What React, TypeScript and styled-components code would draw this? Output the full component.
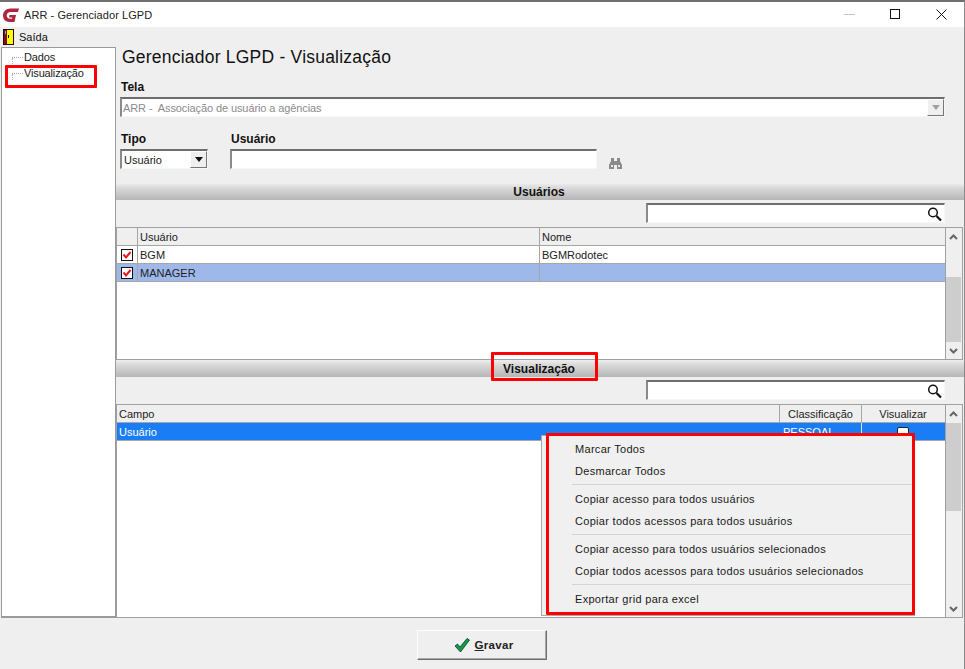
import React from "react";
import styled, { createGlobalStyle } from "styled-components";

const Global = createGlobalStyle`
  html, body { margin: 0; padding: 0; background: #fff; overflow: hidden; }
  * { box-sizing: border-box; }
  body { font-family: "Liberation Sans", Arial, sans-serif; font-size: 11px; color: #111; }
`;

const Window = styled.div`
  position: relative; width: 965px; height: 669px; display: flex; flex-direction: column;
  background: #efefef; border-top: 2px solid #6f6f6f; border-right: 1px solid #8a8a8a;
`;
const TitleBar = styled.div`
  height: 25px; flex: none; background: #fff; display: flex; align-items: center; padding-left: 3px;
`;
const TitleText = styled.span` margin-left: 5px; font-size: 11px; letter-spacing: 0.08px; color: #222; `;
const WinButtons = styled.div` margin-left: auto; display: flex; align-items: center; height: 100%; `;
const WinButton = styled.div`
  width: 46px; height: 100%; display: flex; align-items: center; justify-content: center;
`;
const MenuBar = styled.div` height: 20px; flex: none; display: flex; align-items: center; gap: 5px; padding-left: 3px; `;
const Body = styled.div` height: 571px; flex: none; display: flex; `;
const Tree = styled.div`
  width: 115px; margin-left: 1px; flex: none; background: #fff; border: 1px solid #9a9a9a; border-bottom-width: 2px;
  padding: 1px 0 0 10px;
`;
const TreeItem = styled.div`
  height: 16px; display: flex; align-items: center; font-size: 11px; gap: 1px; color: #222; letter-spacing: -0.15px;
`;
const TreeDots = styled.span`
  width: 11px; height: 1px; border-top: 1px dotted #a8a8a8; position: relative;
  &::after { content: ""; position: absolute; left: 0; top: 0; height: 6px; border-left: 1px dotted #b8b8b8; }
`;
const Main = styled.div` flex: 1; min-width: 0; display: flex; flex-direction: column; `;
const Heading = styled.h1`
  margin: 0; height: 33px; padding: 0 0 0 6px; font: 400 17.5px "Liberation Sans", Arial, sans-serif;
  letter-spacing: 0.22px; color: #111; line-height: 21px;
`;
const FieldLabel = styled.div` font-weight: 700; font-size: 12px; height: 15px; line-height: 15px; color: #111; padding-left: 1px; `;
const Field = styled.div<{ $w?: number }>` width: ${(p) => (p.$w ? p.$w + "px" : "auto")}; flex: none; `;
const TelaBlock = styled.div` padding: 0 19px 0 4px; height: 52px; `;
const Sunken = styled.div`
  height: 20px; width: 100%; background: #fff; display: flex; align-items: center;
  border: 1px solid #f6f6f6; border-top: 2px solid #6e6e6e; border-left: 2px solid #8a8a8a; margin-top: 2px;
  font-size: 11px; padding-left: 2px; color: #222;
`;
const Muted = styled.span` color: #8b8b8b; letter-spacing: -0.1px; white-space: pre; margin-left: -1px; `;
const ComboBtn = styled.div<{ $off?: boolean }>`
  margin-left: auto; width: 17px; height: 17px; background: #efefef; display: flex; align-items: center; justify-content: center;
  border: 1px solid; border-color: #fff #777 #777 #fff;
  &::after { content: ""; border: 4px solid transparent; border-top: 5px solid ${(p) => (p.$off ? "#a0a0a0" : "#111")}; border-bottom: 0; }
`;
const FormRow = styled.div` display: flex; gap: 22px; padding-left: 4px; height: 51px; position: relative; `;
const SectionBar = styled.div`
  height: 17px; flex: none; background: linear-gradient(#efefef, #d8d8d8 30%, #b6b6b6);
  font-weight: 700; font-size: 12px; display: flex; align-items: center; justify-content: center; color: #111; padding-right: 2px;
`;
const SearchRow = styled.div` height: 27px; flex: none; padding: 3px 19px 0 0; display: flex; justify-content: flex-end; `;
const SearchBox = styled.div`
  width: 299px; height: 20px; background: #fff; display: flex; align-items: center; justify-content: flex-end; padding-right: 1px;
  border: 1px solid #f6f6f6; border-top: 2px solid #6e6e6e; border-left: 2px solid #8a8a8a;
`;
const Grid = styled.div<{ $h: number }>`
  height: ${(p) => p.$h}px; flex: none; background: #fff; border: 1px solid #a0a0a0; margin-right: 1px;
  display: flex; position: relative;
`;
const GridBody = styled.div` flex: 1; min-width: 0; display: flex; flex-direction: column; `;
const Row = styled.div<{ $bg?: string; $fg?: string }>`
  height: 18px; flex: none; display: flex; background: ${(p) => p.$bg || "#fff"}; color: ${(p) => p.$fg || "#222"};
  border-bottom: 1px solid #a6a6a6; font-size: 11px; line-height: 17px;
`;
const Cell = styled.div<{ $w?: number; $center?: boolean; $line?: string; $pad?: number }>`
  ${(p) => (p.$w ? `width:${p.$w}px; flex:none;` : "flex:1;")}
  padding-left: ${(p) => p.$pad ?? 2}px; padding-top: 1px; border-right: 1px solid ${(p) => p.$line || "transparent"};
  display: flex; align-items: center; overflow: hidden; white-space: nowrap;
  justify-content: ${(p) => (p.$center ? "center" : "flex-start")};
  ${(p) => (p.$center ? "padding-left:0;" : "")}
`;
const Scroll = styled.div`
  width: 17px; flex: none; background: #efefef; border-left: 1px solid #a0a0a0; position: relative;
`;
const Thumb = styled.div<{ $top: number; $h: number }>`
  position: absolute; left: 0; width: 15px; top: ${(p) => p.$top}px; height: ${(p) => p.$h}px; background: #cdcdcd;
`;
const Arrow = styled.svg<{ $bottom?: boolean }>`
  position: absolute; left: 3px; ${(p) => (p.$bottom ? "bottom: 5px" : "top: 6px")};
`;
const CheckBoxEmpty = styled.div` width: 12px; height: 12px; background: #fff; border: 1px solid #222; border-radius: 2px; margin-top: 1px; `;
const Footer = styled.div` flex: 1; display: flex; align-items: center; justify-content: center; padding-top: 3px; `;
const SaveBtn = styled.button`
  width: 130px; height: 30px; background: #efefef; display: flex; align-items: center; justify-content: center; gap: 4px; padding: 0 0 0 3px;
  border: 1px solid; border-color: #fdfdfd #6e6e6e #6e6e6e #fdfdfd; box-shadow: inset -1px -1px 0 #a8a8a8;
  font: 700 11.5px "Liberation Sans", Arial, sans-serif; color: #222; letter-spacing: 0.3px;
  u { text-decoration: underline; }
`;
const Menu = styled.div`
  position: absolute; left: 541px; top: 433px; width: 374px; height: 181px; background: #f0f0f0;
  border: 1px solid #a8a8a8; padding: 2px 0 0 32px;
`;
const MenuItem = styled.div` height: 22px; display: flex; align-items: center; font-size: 11px; color: #1a1a1a; letter-spacing: 0.3px; padding-left: 1px; `;
const MenuSep = styled.div` height: 1px; background: #d4d4d4; margin: 2px 2px 3px -2px; `;
const Mark = styled.div<{ $l: number; $t: number; $w: number; $h: number }>`
  position: absolute; left: ${(p) => p.$l}px; top: ${(p) => p.$t}px; width: ${(p) => p.$w}px; height: ${(p) => p.$h}px;
  border: 3px solid #ff0000; pointer-events: none; border-radius: 1px;
`;
const Binoculars = styled.svg` position: absolute; left: 493px; top: 26px; `;

const Logo = () => (
  <svg width="16" height="16" viewBox="0 0 16 16">
    <path d="M16 1.500H7.500C3 1.500 0 4.700 0 8.600 0 12.400 2.700 15 6.500 15H11.500L13 8H6.500L6 10.500H9.300L9 11.700H7C5 11.700 3.700 10.500 3.700 8.600 3.700 6.300 5.500 5 7.500 5H15z" fill="#b0243f" />
  </svg>
);
const DoorIcon = () => (
  <svg width="11" height="16" viewBox="0 0 11 16">
    <rect width="11" height="16" fill="#2a0a0a" />
    <rect x="4" y="1" width="6" height="14" fill="#ffff00" />
    <rect x="1" y="1" width="3" height="14" fill="#7a1020" />
    <rect x="2" y="2" width="1" height="3" fill="#3fd0e0" />
    <rect x="5" y="6" width="1" height="3" fill="#111" />
  </svg>
);
const SearchIcon = () => (
  <svg width="17" height="16" viewBox="0 0 17 16">
    <circle cx="7" cy="6.500" r="4.300" fill="none" stroke="#111" strokeWidth="1.500" />
    <path d="M10.500 10 L15 14.500" stroke="#111" strokeWidth="2.200" />
  </svg>
);
const RedCheck = () => (
  <svg width="12" height="12" viewBox="0 0 12 12">
    <rect x=".5" y=".5" width="11" height="11" fill="#fff" stroke="#111" />
    <path d="M2.500 5.500L5 8.500 9.500 3" fill="none" stroke="#f01020" strokeWidth="2" />
  </svg>
);
const ArrowUp = () => (
  <Arrow width="9" height="6" viewBox="0 0 9 6"><path d="M1 5L4.500 1.500 8 5" fill="none" stroke="#666" strokeWidth="2" /></Arrow>
);
const ArrowDown = () => (
  <Arrow $bottom width="9" height="6" viewBox="0 0 9 6"><path d="M1 1L4.500 4.500 8 1" fill="none" stroke="#666" strokeWidth="2" /></Arrow>
);

export default function App() {
  return (
    <>
      <Global />
      <Window>
        <TitleBar>
          <Logo />
          <TitleText>ARR - Gerenciador LGPD</TitleText>
          <WinButtons>
            <WinButton>
              <svg width="11" height="11" viewBox="0 0 11 11"><path d="M0 5.500H11" stroke="#c4c4c4" /></svg>
            </WinButton>
            <WinButton>
              <svg width="11" height="11" viewBox="0 0 11 11"><rect x=".5" y=".5" width="9" height="9" fill="none" stroke="#111" /></svg>
            </WinButton>
            <WinButton>
              <svg width="11" height="11" viewBox="0 0 11 11"><path d="M.5 .5L10.500 10.500M10.500 .5L.5 10.500" stroke="#111" /></svg>
            </WinButton>
          </WinButtons>
        </TitleBar>
        <MenuBar>
          <DoorIcon />
          <span>Saída</span>
        </MenuBar>
        <Body>
          <Tree>
            <TreeItem><TreeDots />Dados</TreeItem>
            <TreeItem><TreeDots />Visualização</TreeItem>
          </Tree>
          <Main>
            <Heading>Gerenciador LGPD - Visualização</Heading>
            <TelaBlock>
              <FieldLabel>Tela</FieldLabel>
              <Sunken>
                <Muted>ARR -  Associação de usuário a agências</Muted>
                <ComboBtn $off />
              </Sunken>
            </TelaBlock>
            <FormRow>
              <Field $w={88}>
                <FieldLabel>Tipo</FieldLabel>
                <Sunken>Usuário<ComboBtn /></Sunken>
              </Field>
              <Field $w={367}>
                <FieldLabel>Usuário</FieldLabel>
                <Sunken />
              </Field>
              <Binoculars width="13" height="11" viewBox="0 0 13 11">
                <path d="M2 0h3v3h3V0h3v3l2 4v4H8V7H5v4H0V7l2-4z" fill="#8a8a8a" />
                <rect x="2" y="7" width="2" height="2" fill="#e8e8e8" />
                <rect x="9" y="7" width="2" height="2" fill="#e8e8e8" />
              </Binoculars>
            </FormRow>
            <SectionBar>Usuários</SectionBar>
            <SearchRow><SearchBox><SearchIcon /></SearchBox></SearchRow>
            <Grid $h={133}>
              <GridBody>
                <Row $bg="#efefef">
                  <Cell $w={21} $line="#a6a6a6" />
                  <Cell $w={402} $line="#a6a6a6">Usuário</Cell>
                  <Cell>Nome</Cell>
                </Row>
                <Row>
                  <Cell $w={21} $line="#a6a6a6" $center><RedCheck /></Cell>
                  <Cell $w={402} $line="#a6a6a6">BGM</Cell>
                  <Cell>BGMRodotec</Cell>
                </Row>
                <Row $bg="#9db8e9">
                  <Cell $w={21} $line="#a6a6a6" $center><RedCheck /></Cell>
                  <Cell $w={402} $line="#a6a6a6">MANAGER</Cell>
                  <Cell />
                </Row>
              </GridBody>
              <Scroll>
                <ArrowUp />
                <Thumb $top={49} $h={65} />
                <ArrowDown />
              </Scroll>
            </Grid>
            <SectionBar>Visualização</SectionBar>
            <SearchRow><SearchBox><SearchIcon /></SearchBox></SearchRow>
            <Grid $h={214}>
              <GridBody>
                <Row $bg="#efefef">
                  <Cell $line="#a6a6a6">Campo</Cell>
                  <Cell $w={82} $line="#a6a6a6" $center>Classificação</Cell>
                  <Cell $w={83} $center>Visualizar</Cell>
                </Row>
                <Row $bg="#1a7df5" $fg="#fff">
                  <Cell $line="transparent">Usuário</Cell>
                  <Cell $w={82} $line="#e0e0e0" $pad={3}>PESSOAL</Cell>
                  <Cell $w={83} $center><CheckBoxEmpty /></Cell>
                </Row>
              </GridBody>
              <Scroll>
                <ArrowUp />
                <Thumb $top={18} $h={88} />
                <ArrowDown />
              </Scroll>
            </Grid>
          </Main>
        </Body>
        <Footer>
          <SaveBtn>
            <svg width="17" height="16" viewBox="0 0 17 16">
              <path d="M1 9l2.500-2 2.500 3 7-8.500 2.500 1.500L6.500 15z" fill="#12a02a" stroke="#06306a" strokeWidth=".8" />
            </svg>
            <span><u>G</u>ravar</span>
          </SaveBtn>
        </Footer>
        <Menu>
          <MenuItem>Marcar Todos</MenuItem>
          <MenuItem>Desmarcar Todos</MenuItem>
          <MenuSep />
          <MenuItem>Copiar acesso para todos usuários</MenuItem>
          <MenuItem>Copiar todos acessos para todos usuários</MenuItem>
          <MenuSep />
          <MenuItem>Copiar acesso para todos usuários selecionados</MenuItem>
          <MenuItem>Copiar todos acessos para todos usuários selecionados</MenuItem>
          <MenuSep />
          <MenuItem>Exportar grid para excel</MenuItem>
        </Menu>
        <Mark $l={5} $t={63} $w={92} $h={23} />
        <Mark $l={491} $t={350} $w={107} $h={29} />
        <Mark $l={546} $t={431} $w={369} $h={182} />
      </Window>
    </>
  );
}
